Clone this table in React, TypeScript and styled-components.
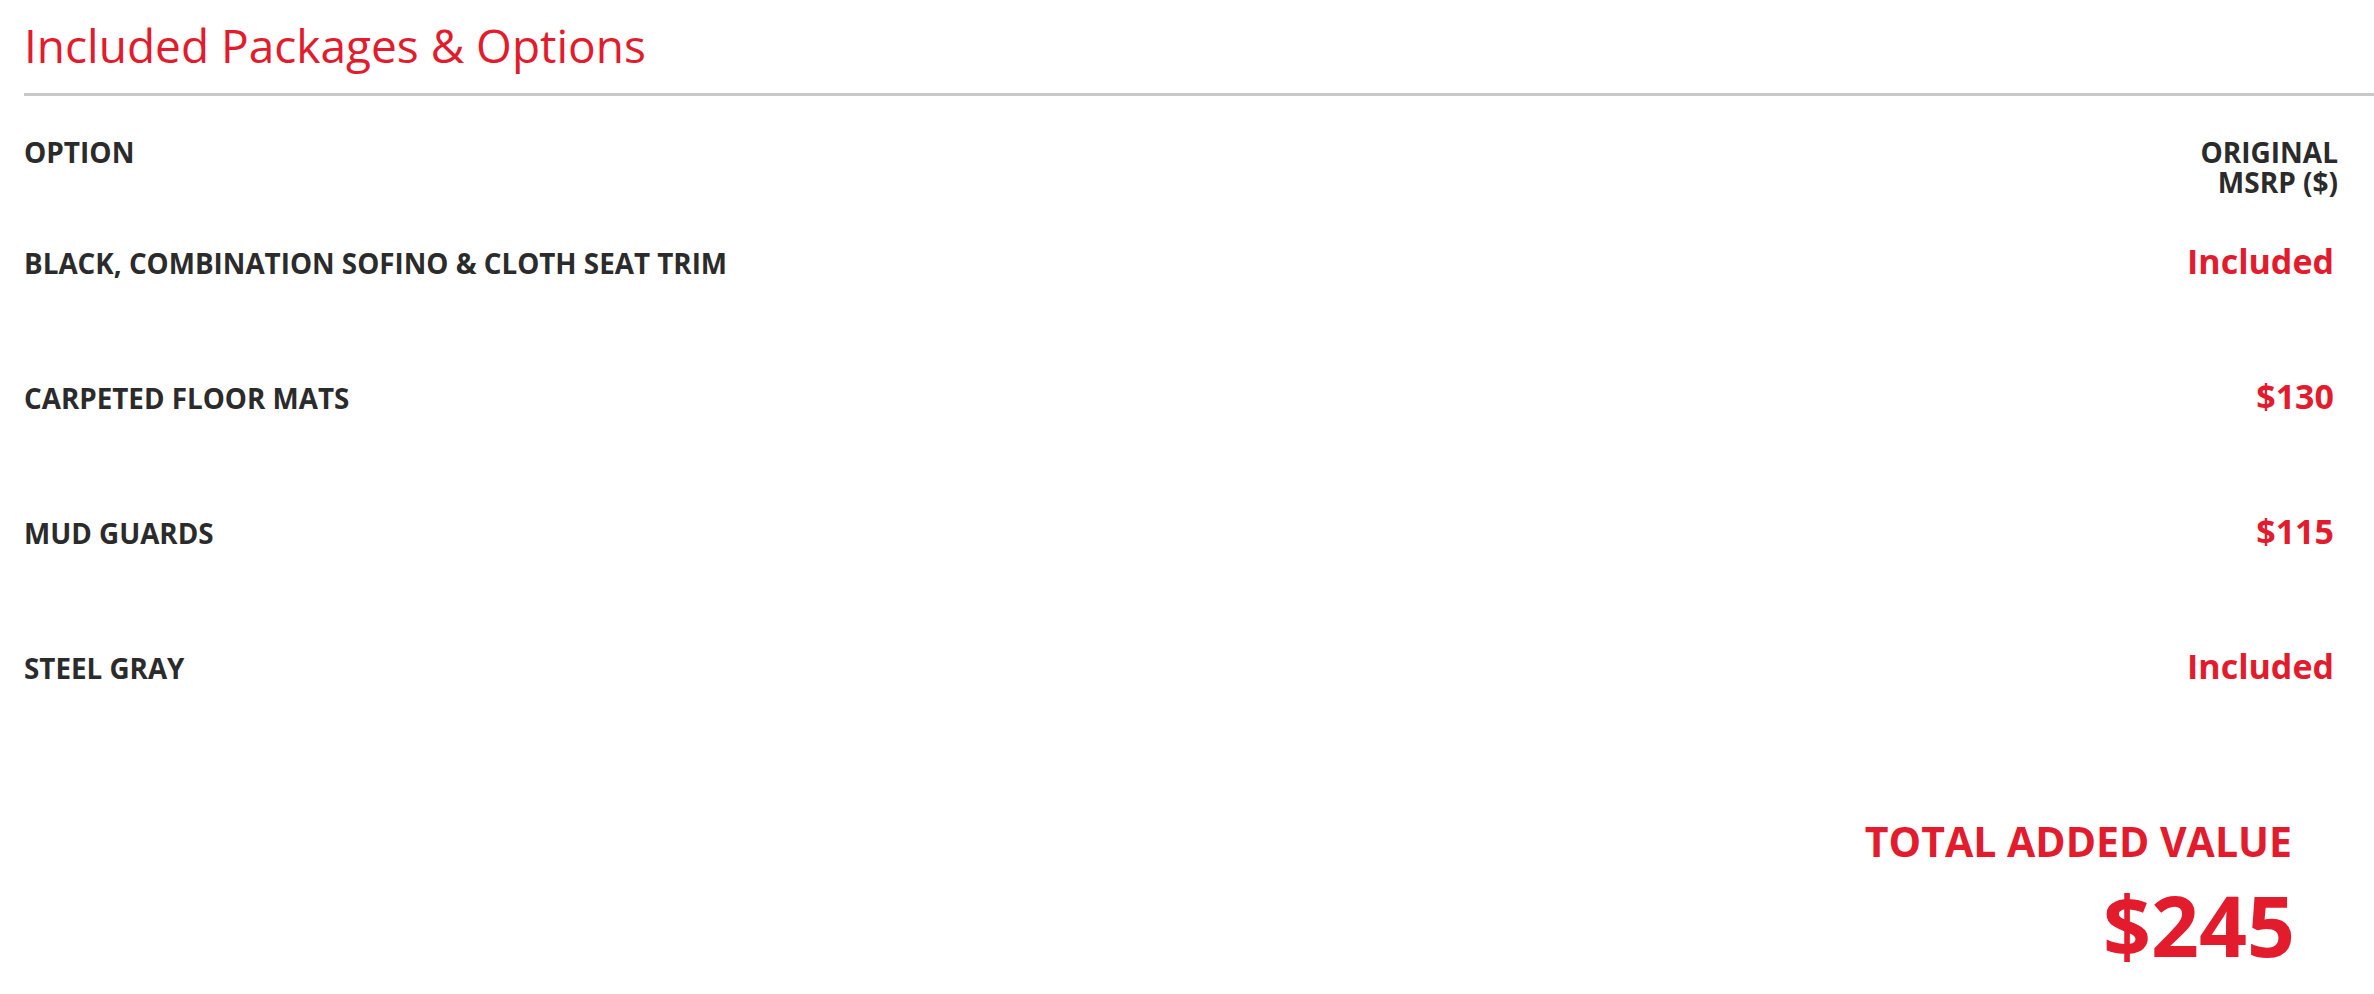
import styled, { createGlobalStyle } from "styled-components";

const GlobalStyle = createGlobalStyle`
  html, body {
    margin: 0;
    padding: 0;
    background: #ffffff;
  }
  body {
    font-family: "Open Sans", "Liberation Sans", Arial, sans-serif;
  }
`;

const RED = "#e21b2d";
const DARK = "#2b2b2b";

const Page = styled.div`
  padding: 17px 0 0 24px;
`;

const Title = styled.h2`
  margin: 0 0 20px;
  font-size: 46px;
  line-height: 56px;
  font-weight: 400;
  color: ${RED};
`;

const Rule = styled.hr`
  margin: 0;
  border: 0;
  height: 3px;
  background: #c8c8c8;
`;

const Table = styled.div`
  padding: 41px 36px 0 0;
`;

const Row = styled.div<{ $head?: boolean }>`
  display: grid;
  grid-template-columns: 1fr 170px;
  align-items: baseline;
  padding: ${(p) => (p.$head ? "0" : "44px 0 49px")};
`;

const HeadCell = styled.div<{ $right?: boolean }>`
  font-size: 28px;
  line-height: 30px;
  font-weight: 700;
  color: ${DARK};
  text-transform: uppercase;
  text-align: ${(p) => (p.$right ? "right" : "left")};
`;

const Name = styled.div`
  font-size: 27.8px;
  line-height: 40px;
  font-weight: 700;
  color: ${DARK};
  text-transform: uppercase;
`;

const Price = styled.div`
  font-size: 34px;
  line-height: 40px;
  font-weight: 700;
  color: ${RED};
  text-align: right;
  padding-right: 4px;
`;

const Total = styled.div`
  display: flex;
  flex-direction: column;
  align-items: flex-end;
  margin: 80px 46px 0 0;
  color: ${RED};
  font-weight: 700;
`;

const TotalLabel = styled.div`
  font-size: 41px;
  line-height: 48px;
  text-transform: uppercase;
`;

const TotalValue = styled.div`
  margin: 12px -3px 0 0;
  font-size: 84px;
  line-height: 96px;
`;

const options = [
  { name: "Black, Combination Sofino & Cloth Seat Trim", price: "Included" },
  { name: "Carpeted Floor Mats", price: "$130" },
  { name: "Mud Guards", price: "$115" },
  { name: "Steel Gray", price: "Included" },
];

export default function App() {
  return (
    <Page>
      <GlobalStyle />
      <Title>Included Packages &amp; Options</Title>
      <Rule />
      <Table>
        <Row $head>
          <HeadCell>Option</HeadCell>
          <HeadCell $right>Original MSRP ($)</HeadCell>
        </Row>
        {options.map((o) => (
          <Row key={o.name}>
            <Name>{o.name}</Name>
            <Price>{o.price}</Price>
          </Row>
        ))}
        <Total>
          <TotalLabel>Total Added Value</TotalLabel>
          <TotalValue>$245</TotalValue>
        </Total>
      </Table>
    </Page>
  );
}
